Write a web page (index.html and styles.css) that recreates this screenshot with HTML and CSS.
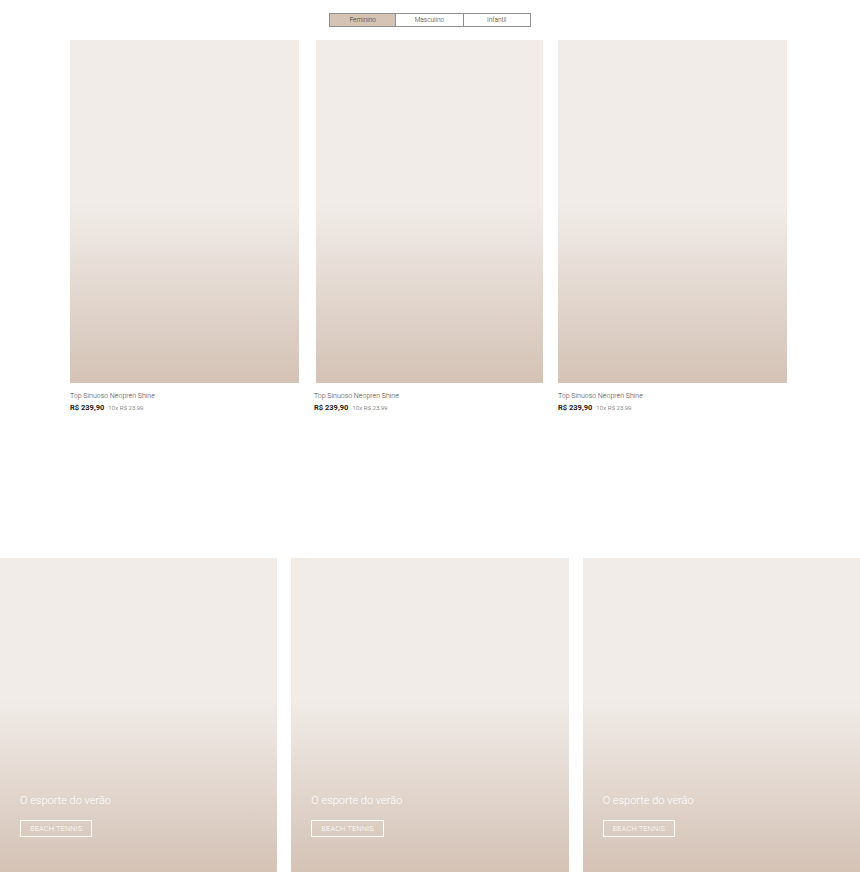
FILE: index.html
```html
<!DOCTYPE html>
<html lang="pt-BR">
<head>
<meta charset="utf-8">
<title>Vitrine</title>
<link rel="stylesheet" href="styles.css">
</head>
<body>
<section class="shelf">
  <div class="tabs">
    <button class="tab active">Feminino</button>
    <button class="tab">Masculino</button>
    <button class="tab">Infantil</button>
  </div>
  <div class="products">
    <div class="product">
      <div class="product-img"></div>
      <p class="product-name">Top Sinuoso Neopren Shine</p>
      <p class="product-price"><strong>R$ 239,90</strong><span>10x R$ 23,99</span></p>
    </div>
    <div class="product product-offset">
      <div class="product-img"></div>
      <p class="product-name">Top Sinuoso Neopren Shine</p>
      <p class="product-price"><strong>R$ 239,90</strong><span>10x R$ 23,99</span></p>
    </div>
    <div class="product">
      <div class="product-img"></div>
      <p class="product-name">Top Sinuoso Neopren Shine</p>
      <p class="product-price"><strong>R$ 239,90</strong><span>10x R$ 23,99</span></p>
    </div>
  </div>
</section>
<section class="banners">
  <div class="banner">
    <p class="banner-title">O esporte do verão</p>
    <a class="banner-btn">BEACH TENNIS</a>
  </div>
  <div class="banner">
    <p class="banner-title">O esporte do verão</p>
    <a class="banner-btn">BEACH TENNIS</a>
  </div>
  <div class="banner">
    <p class="banner-title">O esporte do verão</p>
    <a class="banner-btn">BEACH TENNIS</a>
  </div>
</section>
</body>
</html>
```
FILE: styles.css
```css
* { box-sizing: border-box; }
html, body { margin: 0; padding: 0; background: #fff; }
body { font-family: Roboto, "Liberation Sans", sans-serif; color: #333; overflow: hidden; height: 872px; }

.shelf { padding-top: 13px; height: 558px; }
.tabs { display: flex; justify-content: center; }
.tab {
  width: 67.3px; height: 14px; padding: 0; margin: 0;
  border: 1px solid #8f8f8f; background: #fff;
  font-family: Roboto, "Liberation Sans", sans-serif; font-size: 6.5px; font-weight: 300; color: #333;
  line-height: 12px;
}
.tab + .tab { border-left: none; }
.tab.active { background: #d5c3b6; }

.products { display: flex; gap: 15px; margin: 13px 0 0 70px; }
.product { width: 229px; }
.product-offset .product-img { margin-left: 2px; }
.product-img {
  height: 343px;
  background: linear-gradient(to bottom, #f1ece8 0%, #f1ece8 48%, #d4c2b5 100%);
}
.product-name { margin: 9px 0 0; font-size: 7px; line-height: 9px; color: #444; font-weight: 300; }
.product-price { margin: 2px 0 0; display: flex; align-items: baseline; gap: 4px; line-height: 10px; }
.product-price strong { font-size: 7.5px; font-weight: 700; color: #222; }
.product-price span { font-size: 6.2px; color: #555; font-weight: 300; }

.banners { display: grid; grid-template-columns: repeat(3, 1fr); gap: 14px; }
.banner {
  height: 314px; padding: 0 20px 35px;
  display: flex; flex-direction: column; justify-content: flex-end; align-items: flex-start;
  background: linear-gradient(to bottom, #f1ece8 0%, #f1ece8 45%, #d4c2b5 100%);
}
.banner-title { margin: 0 0 13px; color: #fff; font-size: 11px; font-weight: 300; line-height: 13px; }
.banner-btn {
  display: block; border: 1px solid #fff; color: #fff;
  font-size: 7.5px; font-weight: 300; line-height: 15px; height: 17px; padding: 0 9px; letter-spacing: 0.1px;
}
```
